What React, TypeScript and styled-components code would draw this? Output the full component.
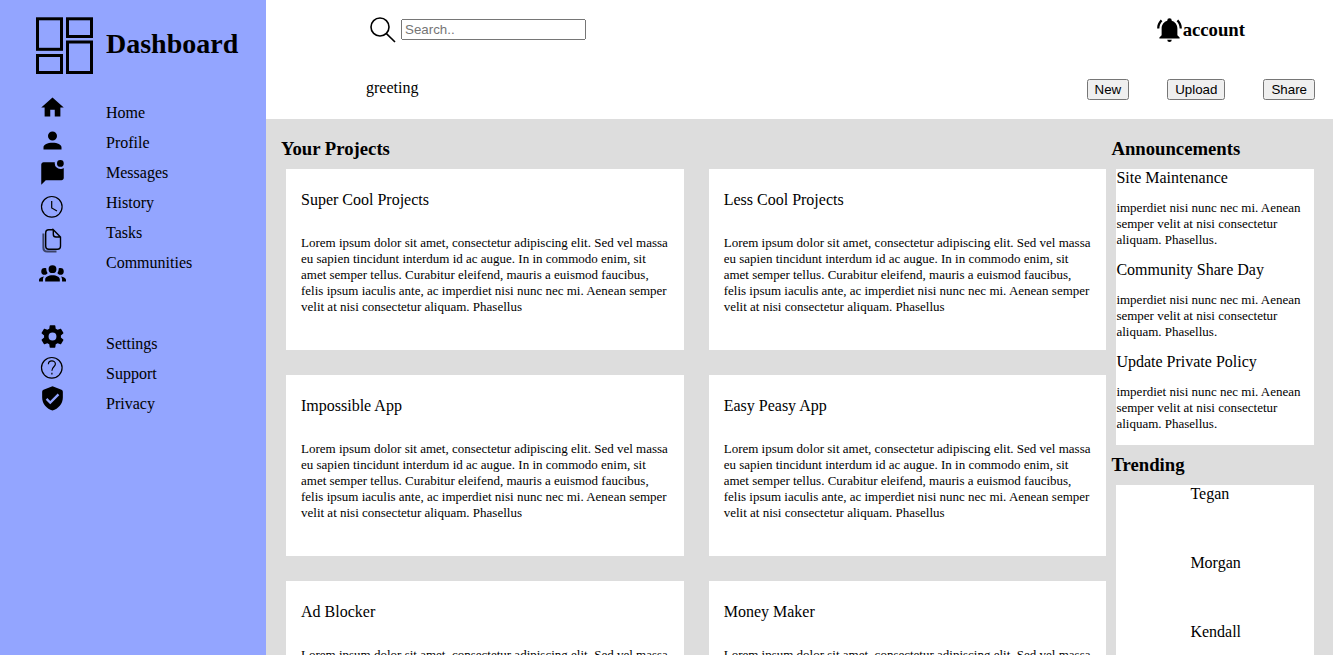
import React from "react";
import styled, { createGlobalStyle } from "styled-components";

const GlobalStyle = createGlobalStyle`
  *, *::before, *::after { box-sizing: border-box; }
  body {
    margin: 0;
    font-family: "Liberation Serif", "Times New Roman", serif;
    font-size: 16px;
    line-height: 18px;
    color: #000;
  }
  h1, h2, h3, p, ul { margin: 0; padding: 0; }
  ul { list-style: none; }
`;

const Page = styled.div`
  display: grid;
  grid-template-columns: 266px minmax(0, 1fr);
  min-height: 100vh;
`;

const Sidebar = styled.aside`
  background: #93a5ff;
  padding: 17px 0 0 36px;
`;

const Brand = styled.div`
  display: flex;
  align-items: center;
  gap: 13px;
`;

const BrandIcon = styled.svg`
  display: block;
  flex: none;
  width: 57px;
  height: 57px;
`;

const BrandName = styled.h1`
  font-size: 28px;
  line-height: 32px;
  padding-bottom: 4px;
`;

const NavGroup = styled.nav<{ $top: number }>`
  display: flex;
  gap: 40px;
  padding-left: 3px;
  margin-top: ${(p) => p.$top}px;
`;

const NavIcons = styled.div<{ $gap: number }>`
  display: flex;
  flex-direction: column;
  gap: ${(p) => p.$gap}px;
`;

const NavList = styled.ul<{ $top: number }>`
  padding-top: ${(p) => p.$top}px;
`;

const NavLink = styled.a`
  display: block;
  line-height: 30px;
  color: inherit;
  text-decoration: none;
`;

const Icon = styled.svg`
  display: block;
  flex: none;
  width: 27px;
  height: 27px;
`;

const Content = styled.div`
  display: flex;
  flex-direction: column;
`;

const Header = styled.header`
  background: #fff;
  padding-left: 100px;
`;

const HeaderRow = styled.div<{ $height: number; $right: number }>`
  display: flex;
  align-items: center;
  justify-content: space-between;
  height: ${(p) => p.$height}px;
  padding-right: ${(p) => p.$right}px;
`;

const Search = styled.label`
  display: flex;
  align-items: center;
  gap: 5px;
  padding-left: 3px;
`;

const SearchInput = styled.input`
  width: 185px;
  height: 21px;
`;

const Account = styled.div`
  display: flex;
  align-items: center;
`;

const Heading = styled.h3`
  line-height: 30px;
`;

const Greeting = styled.p`
  padding-bottom: 2px;
`;

const Actions = styled.div`
  display: flex;
  gap: 38px;
`;

const Action = styled.button`
  height: 21px;
`;

const Main = styled.main`
  flex: 1;
  display: grid;
  grid-template-columns: minmax(0, 4fr) minmax(0, 1fr);
  background: #ddd;
  padding: 15px 14px 15px 15px;
`;

const Cards = styled.div`
  display: grid;
  grid-template-columns: 1fr 1fr;
  gap: 25px;
  margin: 5px;
`;

const Card = styled.article`
  background: #fff;
  padding: 22px 15px 35px;
`;

const CardTitle = styled.p`
  margin-bottom: 26px;
`;

const SmallText = styled.p`
  font-size: 13px;
  line-height: 16px;
`;

const Panel = styled.div`
  background: #fff;
  margin: 5px;
`;

const Notice = styled.article`
  padding-bottom: 13px;
`;

const NoticeTitle = styled.p`
  margin-bottom: 13px;
`;

const Person = styled.li`
  height: 69px;
  padding-left: 74px;
`;

const icons: Record<string, React.ReactNode> = {
  home: <path d="M10,20V14H14V20H19V12H22L12,3L2,12H5V20H10Z" />,
  profile: (
    <path d="M12,4A4,4 0 0,1 16,8A4,4 0 0,1 12,12A4,4 0 0,1 8,8A4,4 0 0,1 12,4M12,14C16.42,14 20,15.79 20,18V20H4V18C4,15.79 7.58,14 12,14Z" />
  ),
  messages: (
    <path d="M22,7V16C22,17.1 21.1,18 20,18H6L2,22V4C2,2.9 2.9,2 4,2H14.1C14,2.3 14,2.7 14,3A5,5 0 0,0 19,8C20.1,8 21.2,7.6 22,7M16,3A3,3 0 0,0 19,6A3,3 0 0,0 22,3A3,3 0 0,0 19,0A3,3 0 0,0 16,3Z" />
  ),
  communities: (
    <path d="M12,5.5A3.5,3.5 0 0,1 15.5,9A3.5,3.5 0 0,1 12,12.5A3.5,3.5 0 0,1 8.5,9A3.5,3.5 0 0,1 12,5.5M5,8C5.56,8 6.08,8.15 6.53,8.42C6.38,9.85 6.8,11.27 7.66,12.38C7.16,13.34 6.16,14 5,14A3,3 0 0,1 2,11A3,3 0 0,1 5,8M19,8A3,3 0 0,1 22,11A3,3 0 0,1 19,14C17.84,14 16.84,13.34 16.34,12.38C17.2,11.27 17.62,9.85 17.47,8.42C17.92,8.15 18.44,8 19,8M5.5,18.25C5.5,16.18 8.41,14.5 12,14.5C15.59,14.5 18.5,16.18 18.5,18.25V20H5.5V18.25M0,20V18.5C0,17.11 1.89,15.94 4.45,15.6C3.86,16.28 3.5,17.22 3.5,18.25V20H0M24,20H20.5V18.25C20.5,17.22 20.14,16.28 19.55,15.6C22.11,15.94 24,17.11 24,18.5V20Z" />
  ),
  settings: (
    <path d="M12,15.5A3.5,3.5 0 0,1 8.5,12A3.5,3.5 0 0,1 12,8.5A3.5,3.5 0 0,1 15.5,12A3.5,3.5 0 0,1 12,15.5M19.43,12.97C19.47,12.65 19.5,12.33 19.5,12C19.5,11.67 19.47,11.34 19.43,11L21.54,9.37C21.73,9.22 21.78,8.95 21.66,8.73L19.66,5.27C19.54,5.05 19.27,4.96 19.05,5.05L16.56,6.05C16.04,5.66 15.5,5.32 14.87,5.07L14.5,2.42C14.46,2.18 14.25,2 14,2H10C9.75,2 9.54,2.18 9.5,2.42L9.13,5.07C8.5,5.32 7.96,5.66 7.44,6.05L4.95,5.05C4.73,4.96 4.46,5.05 4.34,5.27L2.34,8.73C2.21,8.95 2.27,9.22 2.46,9.37L4.57,11C4.53,11.34 4.5,11.67 4.5,12C4.5,12.33 4.53,12.65 4.57,12.97L2.46,14.63C2.27,14.78 2.21,15.05 2.34,15.27L4.34,18.73C4.46,18.95 4.73,19.03 4.95,18.95L7.44,17.94C7.96,18.34 8.5,18.68 9.13,18.93L9.5,21.58C9.54,21.82 9.75,22 10,22H14C14.25,22 14.46,21.82 14.5,21.58L14.87,18.93C15.5,18.67 16.04,18.34 16.56,17.94L19.05,18.95C19.27,19.03 19.54,18.95 19.66,18.73L21.66,15.27C21.78,15.05 21.73,14.78 21.54,14.63L19.43,12.97Z" />
  ),
  privacy: (
    <path
      fillRule="evenodd"
      d="M10,17L6,13L7.41,11.59L10,14.17L16.59,7.58L18,9ZM12,1.2L4,4.2Q2.8,4.7 2.8,6V11C2.8,16.55 6.84,21.2 12,22.6C17.16,21.2 21.2,16.55 21.2,11V6Q21.2,4.7 20,4.2Z"
    />
  ),
  bell: (
    <path d="M21,19V20H3V19L5,17V11C5,7.9 7.03,5.17 10,4.29C10,4.19 10,4.1 10,4A2,2 0 0,1 12,2A2,2 0 0,1 14,4C14,4.1 14,4.19 14,4.29C16.97,5.17 19,7.9 19,11V17L21,19M14,21A2,2 0 0,1 12,23A2,2 0 0,1 10,21M19.75,3.19L18.33,4.61C20.04,6.3 21,8.6 21,11H23C23,8.07 21.84,5.25 19.75,3.19M1,11H3C3,8.6 3.96,6.3 5.67,4.61L4.25,3.19C2.16,5.25 1,8.07 1,11Z" />
  ),
};

const lineIcons: Record<string, React.ReactNode> = {
  history: (
    <>
      <circle cx="12.8" cy="13.8" r="10.3" />
      <path d="M12.7 8V15L18 18" />
    </>
  ),
  tasks: (
    <>
      <path
        strokeWidth="1.4"
        d="M14.3 3.7H9.7Q6.7 3.7 6.7 6.7V20.3Q6.7 23.3 9.7 23.3H18.5Q21.5 23.3 21.5 20.3V11L14.3 3.7V8.2Q14.3 11 17 11H21.5"
      />
      <path strokeWidth="2" opacity="0.6" d="M4.4 7.5V21.8Q4.4 25.6 8.2 25.6H17.5" />
    </>
  ),
  support: (
    <>
      <circle cx="12.8" cy="13.8" r="10.3" />
      <path d="M9.4 10.2C9.4 5.8 16.4 5.8 16.4 10C16.4 12.8 12.9 12.8 12.9 16.8M12.9 18.8V20.4" />
    </>
  ),
};

function Glyph({ name }: { name: string }) {
  if (name in lineIcons) {
    return (
      <Icon viewBox="0 0 27 27" fill="none" stroke="#000" strokeWidth="1.2" aria-hidden="true">
        {lineIcons[name]}
      </Icon>
    );
  }
  return (
    <Icon viewBox="0 0 24 24" aria-hidden="true">
      {icons[name]}
    </Icon>
  );
}

const lorem =
  "Lorem ipsum dolor sit amet, consectetur adipiscing elit. Sed vel massa eu sapien tincidunt interdum id ac augue. In in commodo enim, sit amet semper tellus. Curabitur eleifend, mauris a euismod faucibus, felis ipsum iaculis ante, ac imperdiet nisi nunc nec mi. Aenean semper velit at nisi consectetur aliquam. Phasellus";
const noticeText =
  "imperdiet nisi nunc nec mi. Aenean semper velit at nisi consectetur aliquam. Phasellus.";

const mainNav = ["Home", "Profile", "Messages", "History", "Tasks", "Communities"];
const metaNav = ["Settings", "Support", "Privacy"];
const projects = [
  "Super Cool Projects",
  "Less Cool Projects",
  "Impossible App",
  "Easy Peasy App",
  "Ad Blocker",
  "Money Maker",
];
const notices = ["Site Maintenance", "Community Share Day", "Update Private Policy"];
const people = ["Tegan", "Morgan", "Kendall"];

type NavProps = { items: string[]; top: number; gap: number; listTop: number };

function Nav({ items, top, gap, listTop }: NavProps) {
  return (
    <NavGroup $top={top}>
      <NavIcons $gap={gap}>
        {items.map((item) => (
          <Glyph key={item} name={item.toLowerCase()} />
        ))}
      </NavIcons>
      <NavList $top={listTop}>
        {items.map((item) => (
          <li key={item}>
            <NavLink href="#">{item}</NavLink>
          </li>
        ))}
      </NavList>
    </NavGroup>
  );
}

export default function App() {
  return (
    <>
      <GlobalStyle />
      <Page>
        <Sidebar>
          <Brand>
            <BrandIcon viewBox="0 0 57 57" fill="none" stroke="#000" strokeWidth="3" aria-hidden="true">
              <rect x="1.5" y="1.8" width="24" height="30.5" />
              <rect x="31.5" y="1.8" width="24" height="17.7" />
              <rect x="1.5" y="38.5" width="24" height="17" />
              <rect x="31.5" y="25" width="24" height="30.5" />
            </BrandIcon>
            <BrandName>Dashboard</BrandName>
          </Brand>
          <Nav items={mainNav} top={20} gap={6} listTop={4} />
          <Nav items={metaNav} top={37} gap={4} listTop={6} />
        </Sidebar>
        <Content>
          <Header>
            <HeaderRow $height={59} $right={88}>
              <Search>
                <Icon viewBox="0 0 27 27" fill="none" stroke="#000" strokeWidth="1.6" aria-hidden="true">
                  <circle cx="11" cy="11" r="9" />
                  <path d="M17.2 17.4L26 26" />
                </Icon>
                <SearchInput type="text" placeholder="Search.." aria-label="Search" />
              </Search>
              <Account>
                <Glyph name="bell" />
                <Heading>account</Heading>
              </Account>
            </HeaderRow>
            <HeaderRow $height={60} $right={18}>
              <Greeting>greeting</Greeting>
              <Actions>
                <Action type="button">New</Action>
                <Action type="button">Upload</Action>
                <Action type="button">Share</Action>
              </Actions>
            </HeaderRow>
          </Header>
          <Main>
            <section>
              <Heading>Your Projects</Heading>
              <Cards>
                {projects.map((name) => (
                  <Card key={name}>
                    <CardTitle>{name}</CardTitle>
                    <SmallText>{lorem}</SmallText>
                  </Card>
                ))}
              </Cards>
            </section>
            <aside>
              <Heading>Announcements</Heading>
              <Panel>
                {notices.map((name) => (
                  <Notice key={name}>
                    <NoticeTitle>{name}</NoticeTitle>
                    <SmallText>{noticeText}</SmallText>
                  </Notice>
                ))}
              </Panel>
              <Heading>Trending</Heading>
              <Panel as="ul">
                {people.map((name) => (
                  <Person key={name}>{name}</Person>
                ))}
              </Panel>
            </aside>
          </Main>
        </Content>
      </Page>
    </>
  );
}
